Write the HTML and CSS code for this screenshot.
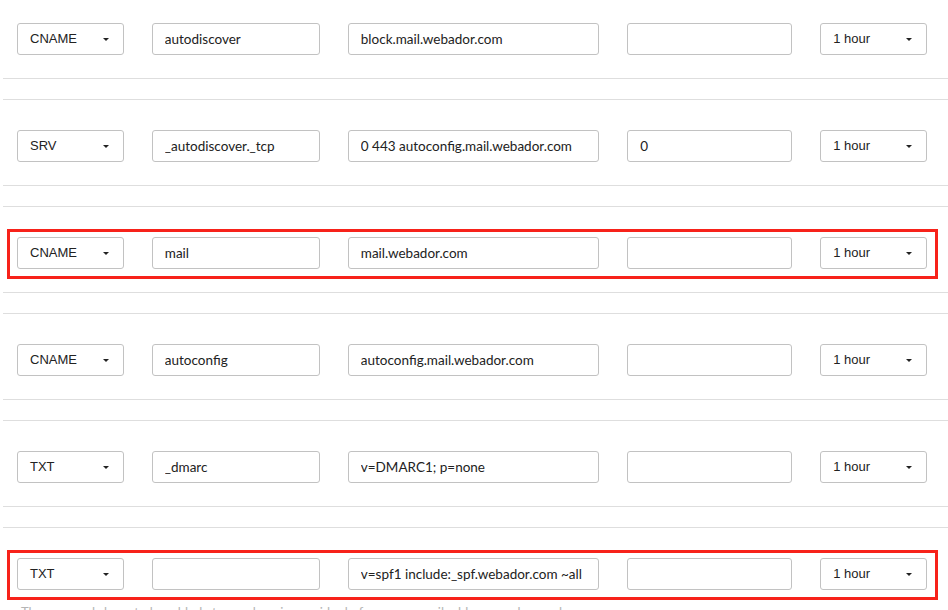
FILE: index.html
```html
<!DOCTYPE html>
<html lang="en">

<head>
    <meta charset="UTF-8">
    <meta name="viewport" content="width=device-width, initial-scale=1.0">
    <title>DNS records</title>
    <link rel="stylesheet" href="styles.css">
</head>

<body>
    <div id="records">
        <div class="record">
            <div class="fields">
                <div class="select type"><span>CNAME</span><i class="caret"></i></div>
                <input class="field name" type="text" value="autodiscover">
                <input class="field value" type="text" value="block.mail.webador.com">
                <input class="field prio" type="text" value="">
                <div class="select ttl"><span>1 hour</span><i class="caret"></i></div>
            </div>
        </div>
        <div class="record">
            <div class="fields">
                <div class="select type"><span>SRV</span><i class="caret"></i></div>
                <input class="field name" type="text" value="_autodiscover._tcp">
                <input class="field value" type="text" value="0 443 autoconfig.mail.webador.com">
                <input class="field prio" type="text" value="0">
                <div class="select ttl"><span>1 hour</span><i class="caret"></i></div>
            </div>
        </div>
        <div class="record">
            <div class="fields marked">
                <div class="select type"><span>CNAME</span><i class="caret"></i></div>
                <input class="field name" type="text" value="mail">
                <input class="field value" type="text" value="mail.webador.com">
                <input class="field prio" type="text" value="">
                <div class="select ttl"><span>1 hour</span><i class="caret"></i></div>
            </div>
        </div>
        <div class="record">
            <div class="fields">
                <div class="select type"><span>CNAME</span><i class="caret"></i></div>
                <input class="field name" type="text" value="autoconfig">
                <input class="field value" type="text" value="autoconfig.mail.webador.com">
                <input class="field prio" type="text" value="">
                <div class="select ttl"><span>1 hour</span><i class="caret"></i></div>
            </div>
        </div>
        <div class="record">
            <div class="fields">
                <div class="select type"><span>TXT</span><i class="caret"></i></div>
                <input class="field name" type="text" value="_dmarc">
                <input class="field value" type="text" value="v=DMARC1; p=none">
                <input class="field prio" type="text" value="">
                <div class="select ttl"><span>1 hour</span><i class="caret"></i></div>
            </div>
        </div>
        <div class="record last">
            <div class="fields marked">
                <div class="select type"><span>TXT</span><i class="caret"></i></div>
                <input class="field name" type="text" value="">
                <input class="field value" type="text" value="v=spf1 include:_spf.webador.com ~all">
                <input class="field prio" type="text" value="">
                <div class="select ttl"><span>1 hour</span><i class="caret"></i></div>
            </div>
            <p class="note">These records have to be added at your domain provider before your email address can be used.</p>
        </div>
    </div>
</body>

</html>
```

FILE: styles.css
```css
body {
    margin: 0;
    background: #fff;
    color: #333;
    overflow: hidden;
}

#records {
    margin-top: -8px;
}

.record {
    margin-left: 3px;
    margin-bottom: 20px;
    padding: 22px 10px 13px 4px;
    border-top: 1px solid #dedede;
    border-bottom: 1px solid #dedede;
}

.record.last {
    border-bottom: none;
    padding-bottom: 0;
}

.fields {
    display: flex;
    gap: 28px;
    padding: 5px 8px 7px 7px;
    border: 3px solid transparent;
}

.fields.marked {
    border-color: #f7221a;
}

.select,
.field {
    box-sizing: border-box;
    height: 32px;
    border: 1px solid #c2c2c2;
    border-radius: 3px;
    background: #fff;
    color: #222;
}

.select {
    display: flex;
    align-items: center;
    justify-content: space-between;
    width: 107px;
    padding: 0 14px 2px 12px;
    font-family: "Liberation Sans", Arial, sans-serif;
    font-size: 13px;
}

.caret {
    display: block;
    width: 0;
    height: 0;
    margin-top: 2px;
    border-left: 3px solid transparent;
    border-right: 3px solid transparent;
    border-top: 3px solid #222;
}

.field {
    padding: 0 12px 1px 12px;
    font-family: Lato, "Open Sans", sans-serif;
    font-size: 13.5px;
    outline: none;
}

.name {
    width: 168px;
}

.value {
    width: 252px;
}

.prio {
    width: 165px;
}

.note {
    margin: 4px 0 0 14px;
    font-family: Lato, "Open Sans", sans-serif;
    font-size: 13px;
    color: #b5b5b5;
}
```
